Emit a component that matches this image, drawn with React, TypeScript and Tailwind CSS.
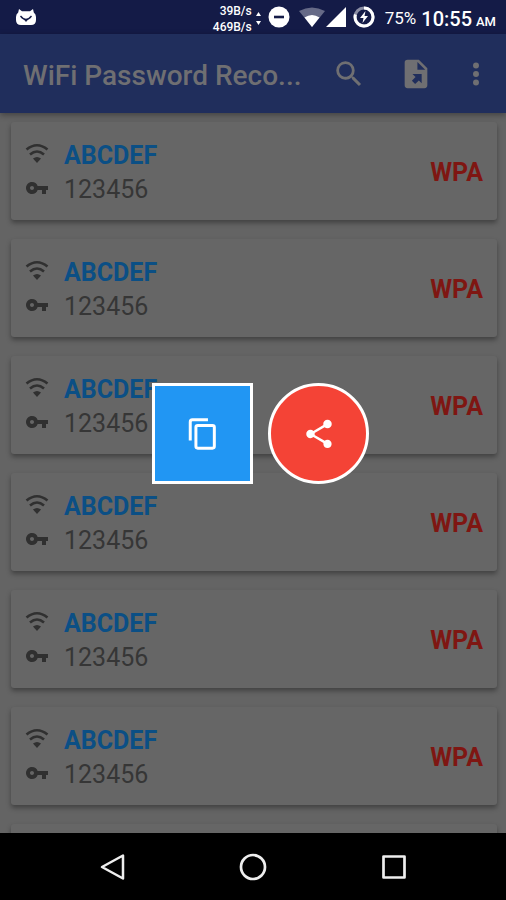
import React from "react";

type Network = { ssid: string; password: string; security: string };

const networks: Network[] = Array.from({ length: 7 }, () => ({
  ssid: "ABCDEF",
  password: "123456",
  security: "WPA",
}));

function StatusBar() {
  return (
    <header className="flex h-[34px] shrink-0 items-center bg-[#141b47] pr-[10px] pl-4 text-white">
      <svg className="h-[18px] w-5" viewBox="0 0 20 18" fill="currentColor">
        <path d="M3 1l3 2.200h8L17 1l.8 3.500Q20 6 20 9v3q0 5-5 5H5q-5 0-5-5V9q0-3 2.200-4.500z" />
        <path d="M4.500 8q5.500 7 11 0" fill="none" stroke="#141b47" strokeWidth="1.300" />
        <path d="M7.500 11h5L10 14z" fill="#141b47" />
      </svg>
      <div className="ml-auto pt-[3px] text-right text-[12px] leading-4 font-medium">
        <div>39B/s</div>
        <div>469B/s</div>
      </div>
      <svg className="ml-1 h-[18px] w-[5px]" viewBox="0 0 5 18" fill="currentColor">
        <path d="M2.500 4L5 8H0zM0 13h5l-2.500 4z" />
      </svg>
      <svg className="ml-[7px] size-[22px]" viewBox="0 0 22 22">
        <circle cx="11" cy="11" r="10.500" fill="currentColor" />
        <path d="M6 11h10" stroke="#141b47" strokeWidth="2.600" />
      </svg>
      <svg className="ml-[9px] h-[20px] w-[26px]" viewBox="0 0 26 20" fill="currentColor">
        <path d="M0 4Q13-3 26 4L13 20z" opacity=".35" />
        <path d="M5.500 10.500q7.500-5 15 0L13 20z" />
      </svg>
      <svg className="ml-[1px] size-5" viewBox="0 0 20 20" fill="currentColor">
        <path d="M20 0v20H0z" />
      </svg>
      <svg className="ml-[7px] size-[22px]" viewBox="0 0 22 22" fill="none">
        <circle cx="11" cy="11" r="9" stroke="#8a8da3" strokeWidth="3" />
        <path d="M11 2a9 9 0 1 1-8.600 6.500" stroke="currentColor" strokeWidth="3" />
        <path d="M12.500 5L7 12h3.500L9.500 17l5.500-7h-3.500z" fill="currentColor" />
      </svg>
      <span className="ml-[10px] pt-[3px] text-[17px]">75%</span>
      <span className="ml-[5px] pt-[3px] text-[20px] font-medium">
        10:55 <span className="-ml-px text-[13px]">AM</span>
      </span>
    </header>
  );
}

function AppBar() {
  return (
    <div className="z-10 flex h-[79px] shrink-0 items-center bg-[#202e5c] pr-[13px] pl-[23px] text-[#6f6f72] shadow-[0_2px_6px_rgba(0,0,0,0.35)]">
      <h1 className="pt-1 text-[28px] font-medium whitespace-nowrap">WiFi Password Reco...</h1>
      <button aria-label="Search" className="ml-auto">
        <svg className="size-[34px]" viewBox="0 0 24 24" fill="currentColor">
          <path d="M15.500 14h-.79l-.28-.27A6.470 6.470 0 0 0 16 9.500 6.500 6.500 0 1 0 9.500 16c1.610 0 3.090-.59 4.230-1.570l.27.28v.79l5 4.990L20.490 19zM9.500 14C7.010 14 5 11.990 5 9.500S7.010 5 9.500 5 14 7.010 14 9.500 11.990 14 9.500 14" />
        </svg>
      </button>
      <button aria-label="Export" className="ml-[33px]">
        <svg className="size-[34px]" viewBox="0 0 24 24">
          <path
            fill="currentColor"
            d="M6 2h8l6 6v12a2 2 0 0 1-2 2H6a2 2 0 0 1-2-2V4a2 2 0 0 1 2-2zm7 1.500V9h5.500z"
          />
          <path fill="#202e5c" d="M9.500 12h6.500v6.500l-2-2-2.600 2.600-2.300-2.300 2.600-2.600z" />
        </svg>
      </button>
      <button aria-label="More options" className="ml-[26px]">
        <svg className="size-[34px]" viewBox="0 0 24 24" fill="currentColor">
          <circle cx="12" cy="6" r="2.100" />
          <circle cx="12" cy="12" r="2.100" />
          <circle cx="12" cy="18" r="2.100" />
        </svg>
      </button>
    </div>
  );
}

function NetworkCard({ ssid, password, security }: Network) {
  return (
    <li className="flex h-[98px] shrink-0 items-center rounded-[3px] bg-[#666666] px-[14px] pt-[3px] shadow-[0_3px_5px_rgba(0,0,0,0.35)]">
      <div className="flex flex-col gap-[2px]">
        <div className="flex h-8 items-center gap-[15px]">
          <svg className="mb-1 size-6 text-[#303030]" viewBox="0 0 24 24" fill="none" stroke="currentColor" strokeWidth="2.600">
            <path d="M1.500 7.500Q12-1 22.500 7.500M5 12.500q7-6 14 0" />
            <path d="M8 16.500q4-3.200 8 0l-4 4.500z" fill="currentColor" stroke="none" />
          </svg>
          <span className="text-[25px] font-bold text-[#0b4f85]">{ssid}</span>
        </div>
        <div className="flex h-8 items-center gap-[15px]">
          <svg className="mb-1 size-6 text-[#303030]" viewBox="0 0 24 24" fill="currentColor">
            <path d="M12.650 10A5.990 5.990 0 0 0 7 6c-3.310 0-6 2.690-6 6s2.690 6 6 6a5.990 5.990 0 0 0 5.650-4H17v4h4v-4h2v-4zM7 14c-1.100 0-2-.9-2-2s.9-2 2-2 2 .9 2 2-.9 2-2 2" />
          </svg>
          <span className="text-[25px] text-[#363636]">{password}</span>
        </div>
      </div>
      <span className="ml-auto text-[25px] font-bold text-[#7f1612]">{security}</span>
    </li>
  );
}

function ActionOverlay() {
  return (
    <div className="absolute inset-0 z-20 flex items-center justify-center gap-[15px] pl-[15px] text-white">
      <button aria-label="Copy" className="flex size-[101px] items-center justify-center border-3 border-white bg-[#2196f3]">
        <svg className="size-[34px]" viewBox="0 0 24 24" fill="none" stroke="currentColor" strokeWidth="2.100">
          <path d="M15.500 2H4.500Q3 2 3 3.500V16.500" />
          <rect x="7" y="6" width="13" height="16" rx="1.300" />
        </svg>
      </button>
      <button aria-label="Share" className="flex size-[101px] items-center justify-center rounded-full border-3 border-white bg-[#f44336]">
        <svg className="size-[34px]" viewBox="0 0 24 24" fill="currentColor">
          <path d="M18 16.080c-.76 0-1.440.3-1.960.77L8.910 12.700c.05-.23.09-.46.09-.7s-.04-.47-.09-.7l7.050-4.110c.54.5 1.250.81 2.040.81 1.660 0 3-1.340 3-3s-1.340-3-3-3-3 1.340-3 3c0 .24.04.47.09.7L8.040 9.810C7.500 9.310 6.790 9 6 9c-1.660 0-3 1.340-3 3s1.340 3 3 3c.79 0 1.500-.31 2.040-.81l7.120 4.160c-.05.21-.08.43-.08.65 0 1.610 1.310 2.920 2.920 2.920s2.920-1.310 2.920-2.920-1.310-2.920-2.920-2.920" />
        </svg>
      </button>
    </div>
  );
}

function NavigationBar() {
  return (
    <nav className="flex h-[67px] shrink-0 items-center justify-center gap-[111px] bg-black text-[#eeeeee]">
      <button aria-label="Back">
        <svg className="size-[30px]" viewBox="0 0 30 30" fill="none" stroke="currentColor" strokeWidth="2.500" strokeLinejoin="round">
          <path d="M26 3.500v23L5 15z" />
        </svg>
      </button>
      <button aria-label="Home">
        <svg className="size-[30px]" viewBox="0 0 30 30" fill="none" stroke="currentColor" strokeWidth="2.700">
          <circle cx="15" cy="15" r="12" />
        </svg>
      </button>
      <button aria-label="Recent apps">
        <svg className="size-[30px]" viewBox="0 0 30 30" fill="none" stroke="currentColor" strokeWidth="2.700" strokeLinejoin="round">
          <path d="M4.500 4.500h21v21h-21z" />
        </svg>
      </button>
    </nav>
  );
}

export default function App() {
  return (
    <div className="flex h-screen flex-col bg-black font-['Roboto',sans-serif]">
      <StatusBar />
      <div className="relative flex min-h-0 flex-1 flex-col">
        <AppBar />
        <main className="min-h-0 flex-1 overflow-hidden bg-[#646464]">
          <ul className="flex flex-col gap-[19px] pt-[9px] pr-[9px] pl-[11px]">
            {networks.map((network, index) => (
              <NetworkCard key={index} {...network} />
            ))}
          </ul>
        </main>
        <ActionOverlay />
      </div>
      <NavigationBar />
    </div>
  );
}
